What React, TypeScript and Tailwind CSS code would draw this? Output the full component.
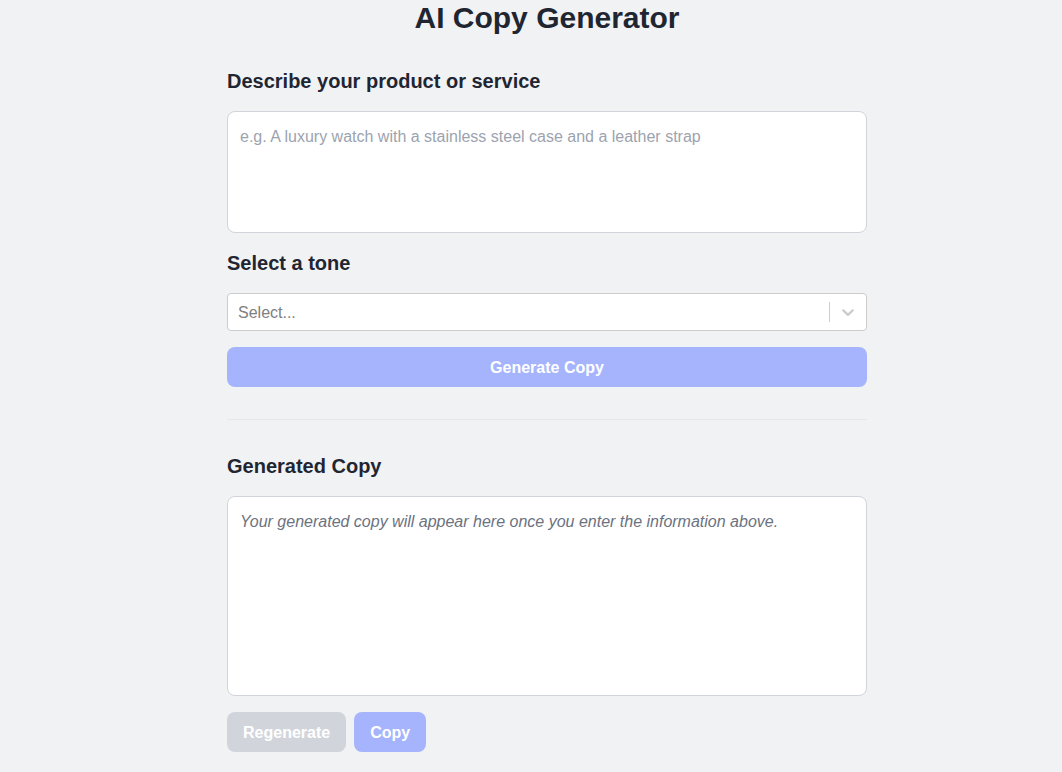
export default function App() {
  return (
    <main className="min-h-screen bg-[#f1f2f4] pl-8 font-['Liberation_Sans',Arial,sans-serif] text-gray-800">
      <div className="mx-auto w-[640px]">
        <h1 className="text-center text-3xl font-bold leading-9 text-[#1f2632]">AI Copy Generator</h1>

        {/* Product description */}
        <h2 className="mt-[31px] text-xl font-bold leading-7 text-[#1f2632]">Describe your product or service</h2>
        <textarea
          className="mt-4 block h-[122px] w-full resize-none rounded-lg border border-[#d1d5db] bg-white px-3 pt-[13px] pb-3 text-base leading-6 text-gray-800 outline-none placeholder:text-[#9ca3af]"
          placeholder="e.g. A luxury watch with a stainless steel case and a leather strap"
        />

        {/* Tone select */}
        <h2 className="mt-4 text-xl font-bold leading-7 text-[#1f2632]">Select a tone</h2>
        <div className="mt-4 flex h-[38px] items-center rounded border border-[#cccccc] bg-white">
          <span className="flex-1 pt-px pl-[10px] text-base text-[#808080]">Select...</span>
          <span className="h-5 w-px bg-[#cccccc]" />
          <span className="flex w-9 items-center justify-center text-[#cccccc]">
            <svg width="20" height="20" viewBox="0 0 20 20" fill="currentColor">
              <path d="M4.516 7.548c0.436-0.446 1.043-0.481 1.576 0l3.908 3.747 3.908-3.747c0.533-0.481 1.141-0.446 1.574 0 0.436 0.445 0.408 1.197 0 1.615-0.406 0.418-4.695 4.502-4.695 4.502-0.217 0.223-0.502 0.335-0.787 0.335s-0.57-0.112-0.789-0.335c0 0-4.287-4.084-4.695-4.502s-0.436-1.17 0-1.615z" />
            </svg>
          </span>
        </div>

        <button className="mt-4 flex h-10 w-full items-center justify-center rounded-lg bg-[#a5b4fc] pt-px text-base font-bold text-white">
          Generate Copy
        </button>

        <hr className="my-8 border-t border-[#e5e7eb]" />

        {/* Output */}
        <h2 className="text-xl font-bold leading-7 text-[#1f2632]">Generated Copy</h2>
        <div className="mt-4 h-[200px] rounded-lg border border-[#d1d5db] bg-white px-3 pt-[13px] pb-3">
          <p className="text-base italic leading-6 text-[#6b7280]">
            Your generated copy will appear here once you enter the information above.
          </p>
        </div>

        <div className="mt-4 flex gap-2">
          <button className="h-10 rounded-lg bg-[#d1d5db] px-4 pt-px text-base font-bold text-white">Regenerate</button>
          <button className="h-10 rounded-lg bg-[#a5b4fc] px-4 pt-px text-base font-bold text-white">Copy</button>
        </div>
      </div>
    </main>
  )
}
